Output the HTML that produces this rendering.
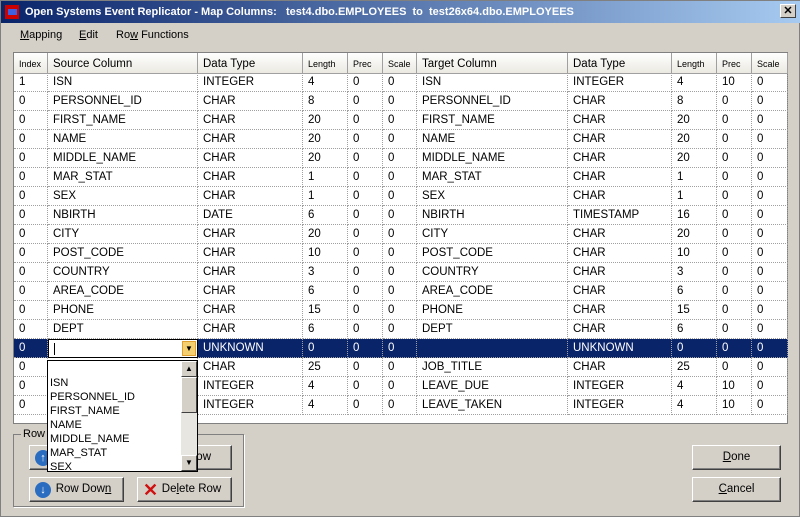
<!DOCTYPE html>
<html><head><style>
*{box-sizing:border-box;margin:0;padding:0}
body{width:800px;height:517px;background:#d4d0c8;font-family:"Liberation Sans",sans-serif;font-size:11px;position:relative;overflow:hidden;border:1px solid #808080}
.title{position:absolute;left:0;top:0;width:800px;height:22px;background:linear-gradient(90deg,#0a246a,#a6caf0);color:#fff;font-weight:bold;font-size:11px;line-height:22px;padding-left:24px}
.x{position:absolute;right:5px;top:3px;width:16px;height:14px;background:#d4d0c8;border:1px solid;border-color:#fff #404040 #404040 #fff;color:#000;font-size:11px;line-height:12px;text-align:center}
.menu{position:absolute;top:28px;font-size:11px}
.grid{position:absolute;left:12px;top:51px;width:775px;height:372px;background:#fff;border:1px solid #808080}
.c{position:absolute;height:19px;line-height:18px;padding-left:5px;border-right:1px dotted #a0a0a0;border-bottom:1px dotted #a0a0a0;white-space:nowrap;overflow:hidden;font-size:11.5px;color:#000}
.h{position:absolute;top:0;height:21px;line-height:22px;padding-left:5px;background:linear-gradient(#fff,#ebe9e1);border-right:1px solid #a0a0a0;border-bottom:1px solid #a0a0a0;font-size:11.5px}
.hs{font-size:9px}
.sel{background:#0a246a;color:#fff}
.btn{position:absolute;height:25px;background:#d4d0c8;border:1px solid;border-color:#fff #404040 #404040 #fff;box-shadow:inset -1px -1px #808080;font-size:11.5px;line-height:23px;text-align:center}
.ic{position:absolute;left:5px;top:4px;width:16px;height:16px;border-radius:50%;background:#2a6cc0;color:#fff;font-size:11px;line-height:16px;text-align:center}
</style></head><body>
<div class="title"><span style="position:absolute;left:4px;top:4px;width:14px;height:14px;background:#c00"></span><span style="position:absolute;left:7px;top:8px;width:9px;height:6px;background:#4060e0"></span>Open Systems Event Replicator - Map Columns:&nbsp;&nbsp; test4.dbo.EMPLOYEES&nbsp; to&nbsp; test26x64.dbo.EMPLOYEES<div class="x">✕</div></div>
<div class="menu" style="left:19px"><u>M</u>apping</div>
<div class="menu" style="left:78px"><u>E</u>dit</div>
<div class="menu" style="left:115px">Ro<u>w</u> Functions</div>
<div class="grid" id="g"></div>
<div style="position:absolute;left:12px;top:433px;width:231px;height:73px;border:1px solid #808080;box-shadow:1px 1px #fff"></div>
<div style="position:absolute;left:20px;top:427px;background:#d4d0c8;padding:0 2px">Row</div>
<div class="btn" style="left:28px;top:444px;width:95px"><span class="ic">↑</span></div>
<div class="btn" style="left:136px;top:444px;width:95px;text-align:right;padding-right:20px">ow</div>
<div class="btn" style="left:28px;top:476px;width:95px;padding-left:14px">Row Dow<u>n</u><span class="ic">↓</span></div>
<div class="btn" style="left:136px;top:476px;width:95px;padding-left:14px">De<u>l</u>ete Row<span style="position:absolute;left:5px;top:2px;color:#d01010;font-size:18px;font-weight:bold;line-height:20px">✕</span></div>
<div class="btn" style="left:691px;top:444px;width:89px"><u>D</u>one</div>
<div class="btn" style="left:691px;top:476px;width:89px"><u>C</u>ancel</div>
<div style="position:absolute;left:46px;top:359px;width:151px;height:112px;background:#fff;border:1px solid #000;font-size:11px;line-height:14px;padding:15px 0 0 2px;color:#000">ISN<br>PERSONNEL_ID<br>FIRST_NAME<br>NAME<br>MIDDLE_NAME<br>MAR_STAT<br>SEX
<div style="position:absolute;right:0;top:0;width:16px;height:110px;background:#e8e6e0">
<div style="height:16px;background:#d4d0c8;border:1px solid;border-color:#fff #404040 #404040 #fff;font-size:8px;text-align:center;line-height:14px">▲</div>
<div style="height:36px;background:#d4d0c8;border:1px solid;border-color:#fff #404040 #404040 #fff"></div>
<div style="position:absolute;bottom:0;width:16px;height:16px;background:#d4d0c8;border:1px solid;border-color:#fff #404040 #404040 #fff;font-size:8px;text-align:center;line-height:14px">▼</div>
</div></div>
<script>
var cols=[[0,34],[34,150],[184,105],[289,45],[334,35],[369,34],[403,151],[554,104],[658,45],[703,35],[738,36]];
var heads=["Index","Source Column","Data Type","Length","Prec","Scale","Target Column","Data Type","Length","Prec","Scale"];
var small=[1,0,0,1,1,1,0,0,1,1,1];
var rows=[
["1","ISN","INTEGER","4","0","0","ISN","INTEGER","4","10","0"],
["0","PERSONNEL_ID","CHAR","8","0","0","PERSONNEL_ID","CHAR","8","0","0"],
["0","FIRST_NAME","CHAR","20","0","0","FIRST_NAME","CHAR","20","0","0"],
["0","NAME","CHAR","20","0","0","NAME","CHAR","20","0","0"],
["0","MIDDLE_NAME","CHAR","20","0","0","MIDDLE_NAME","CHAR","20","0","0"],
["0","MAR_STAT","CHAR","1","0","0","MAR_STAT","CHAR","1","0","0"],
["0","SEX","CHAR","1","0","0","SEX","CHAR","1","0","0"],
["0","NBIRTH","DATE","6","0","0","NBIRTH","TIMESTAMP","16","0","0"],
["0","CITY","CHAR","20","0","0","CITY","CHAR","20","0","0"],
["0","POST_CODE","CHAR","10","0","0","POST_CODE","CHAR","10","0","0"],
["0","COUNTRY","CHAR","3","0","0","COUNTRY","CHAR","3","0","0"],
["0","AREA_CODE","CHAR","6","0","0","AREA_CODE","CHAR","6","0","0"],
["0","PHONE","CHAR","15","0","0","PHONE","CHAR","15","0","0"],
["0","DEPT","CHAR","6","0","0","DEPT","CHAR","6","0","0"],
["0","","UNKNOWN","0","0","0","","UNKNOWN","0","0","0"],
["0","","CHAR","25","0","0","JOB_TITLE","CHAR","25","0","0"],
["0","","INTEGER","4","0","0","LEAVE_DUE","INTEGER","4","10","0"],
["0","","INTEGER","4","0","0","LEAVE_TAKEN","INTEGER","4","10","0"]];
var g=document.getElementById('g'),h='';
cols.forEach(function(c,i){h+='<div class="h'+(small[i]?' hs':'')+'" style="left:'+c[0]+'px;width:'+c[1]+'px">'+heads[i]+'</div>';});
rows.forEach(function(r,j){var t=20+j*19;cols.forEach(function(c,i){
var s=(j==14)?' sel':'';
if(j==14&&i==1){h+='<div class="c" style="left:'+c[0]+'px;top:'+t+'px;width:'+c[1]+'px;background:#fff;border:1px solid #000"><span style="position:absolute;left:5px;top:3px;width:1px;height:12px;background:#000"></span><span style="position:absolute;right:1px;top:1px;width:14px;height:15px;background:#f4d070;border:1px solid #e0a030;font-size:8px;line-height:13px;text-align:center;padding:0">▼</span></div>';return;}
h+='<div class="c'+s+'" style="left:'+c[0]+'px;top:'+t+'px;width:'+c[1]+'px">'+r[i]+'</div>';});});
g.innerHTML=h;
</script>
</body></html>
